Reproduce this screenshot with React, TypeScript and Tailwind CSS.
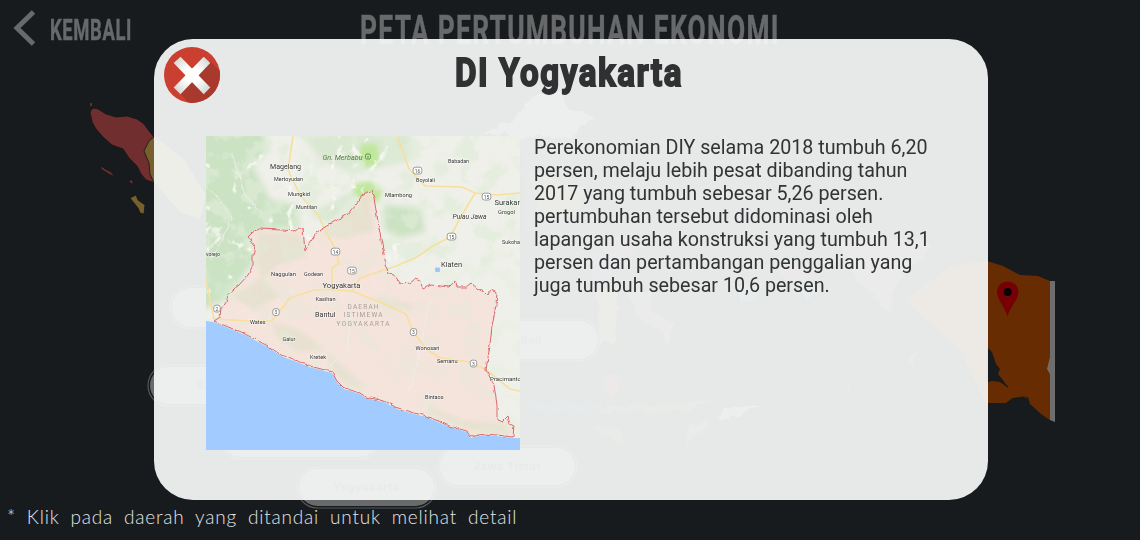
import React from "react";

type Label = [string, number, number, number, number];

const towns: Label[] = [
  ["Magelang", 270, 169, 31, 7.5],
  ["Mertoyudan", 274, 180.5, 29, 5.5],
  ["Mungkid", 288, 196, 22, 5.5],
  ["Muntilan", 296, 208.5, 21, 5.5],
  ["Babadan", 448, 163, 21, 5.5],
  ["Boyolali", 416, 182, 19, 5.5],
  ["Mlambong", 385, 197, 27, 5.5],
  ["Surakar", 494.5, 205, 25.5, 7.5],
  ["Grogol", 498, 214, 17, 5.5],
  ["Sukoha", 502, 244, 18, 5.5],
  ["Klaten", 441, 266.5, 21, 7.5],
  ["vorejo", 206, 256, 14, 5.5],
  ["Naggulan", 271, 276, 25, 5.5],
  ["Godean", 304, 276, 19, 5.5],
  ["Yogyakarta", 322.5, 287.5, 38, 8],
  ["Kasihan", 315.5, 301, 20, 5.5],
  ["Bantul", 315, 317, 20.5, 7],
  ["Wates", 250, 323.5, 15.5, 5.5],
  ["Galur", 282.5, 341, 13, 5.5],
  ["Kretek", 310, 359, 16, 5.5],
  ["Wonosari", 415.5, 350, 24, 5.5],
  ["Semanu", 437, 363, 20.5, 5.5],
  ["Pracimanto", 490, 381, 31, 6],
  ["Bintaos", 425, 398.5, 18.5, 5.5],
];

const shields: [string, number, number][] = [
  ["14", 335.5, 251.5], ["15", 352, 270.5], ["16", 417.5, 170.5], ["15", 486.5, 196.5],
  ["15", 451.5, 236.5], ["2", 217, 308.5], ["3", 276, 312], ["3", 413.5, 332], ["3", 473.5, 363.5],
];

const province =
  "M214 321 L220 317 L221 308 L226 301 L229 293 L239 285 L248 275 L253 265 L253 255 L255 246 L252 242 L248 237 L253 232 L258 229 L282 230 L294 231 L299 227 L303 229 L304 240 L305 251 L309 244 L317 232 L325 227 L339 219 L347 215 L355 205 L363 195 L371 190 L374 198 L378 222 L383 250 L388 274 L394 275 L401 284 L410 283 L415 279 L420 281 L423 289 L431 285 L441 286 L449 287 L455 281 L457 287 L466 287 L471 283 L478 289 L484 292 L488 296 L491 289 L497 292 L496 305 L492 326 L490 345 L486 370 L494 385 L497 405 L497 420 L502 422 L508 416 L510 424 L514 426 L513 437 L497 435 L484 434 L471 437 L467 431 L449 426 L427 416 L414 413 L397 408 L384 401 L366 397 L360 393 L344 388 L337 381 L332 372 L310 366 L281 355 L268 346 L245 334 Z";

const coast =
  "M206 321 L214 322 L245 335 L268 347 L281 356 L310 367 L332 373 L337 382 L344 389 L360 394 L366 398 L384 402 L397 409 L414 414 L427 417 L449 427 L467 432 L470 438 L484 435 L497 436 L513 438 L520 438 V450 H206 Z";

function RegionMap() {
  return (
    <svg className="block h-[314px] w-[314px] shrink-0" viewBox="206 136 314 314" fontFamily="Roboto, sans-serif">
      <defs>
        <filter id="patches" x="0" y="0" width="100%" height="100%">
          <feTurbulence type="fractalNoise" baseFrequency="0.05" numOctaves="4" seed="8" />
          <feColorMatrix values="0 0 0 0 0.74  0 0 0 0 0.85  0 0 0 0 0.69  6 0 0 0 -2.95" />
        </filter>
        <filter id="valleys" x="0" y="0" width="100%" height="100%">
          <feTurbulence type="turbulence" baseFrequency="0.024" numOctaves="4" seed="4" />
          <feColorMatrix values="0 0 0 0 0.95  0 0 0 0 0.95  0 0 0 0 0.91  -11 0 0 0 1.7" />
        </filter>
        <filter id="wobble" x="-2%" y="-2%" width="104%" height="104%">
          <feTurbulence type="fractalNoise" baseFrequency="0.16" numOctaves="2" seed="3" result="n" />
          <feDisplacementMap in="SourceGraphic" in2="n" scale="4" xChannelSelector="R" yChannelSelector="G" />
        </filter>
        <filter id="soft"><feGaussianBlur stdDeviation="3" /></filter>
        <filter id="feather"><feGaussianBlur stdDeviation="2" /></filter>
        <clipPath id="inland"><path d={province} /></clipPath>
      </defs>
      <rect x="206" y="136" width="314" height="314" fill="#f0f0ea" />
      <g filter="url(#soft)" fill="#cbe2c3">
        <path d="M200 130 H262 L268 150 L252 165 L270 200 L296 205 L300 228 L258 229 L250 240 L254 262 L225 300 L200 310 Z" />
        <path d="M300 132 H410 L412 160 L350 172 L320 160 Z" opacity=".6" />
        <path d="M384 205 L420 208 L425 232 L400 238 L384 230 Z" />
        <path d="M310 215 L368 183 L330 222 Z" opacity=".7" />
      </g>
      <g filter="url(#feather)" fill="#c0e79c">
        <path d="M362 144 L377 144 L380 164 L365 168 L358 158 Z" />
        <path d="M354 184 L370 181 L383 191 L378 202 L364 203 L354 194 Z" />
      </g>
      <rect x="206" y="136" width="314" height="130" filter="url(#patches)" opacity=".65" />
      <rect x="206" y="266" width="314" height="184" filter="url(#patches)" opacity=".35" />
      <path d="M206 136 H400 V210 H305 V230 H253 V275 L206 320 Z" filter="url(#valleys)" opacity=".85" />
      <path d={province} fill="#f5e0d9" fillOpacity=".82" />
      <g filter="url(#feather)" fill="#dfdfc8" opacity=".6">
        <path d="M258 232 L300 234 L306 256 L280 264 L262 280 L256 258 Z" />
        <path d="M322 234 L368 195 L375 230 L345 238 Z" />
        <path d="M232 296 L262 278 L280 296 L254 310 Z" />
        <path d="M372 296 L410 303 L414 310 L390 309 Z" />
        <path d="M325 352 L350 372 L366 390 L344 384 L332 369 Z" />
        <path d="M270 322 L300 330 L325 350 L300 352 L280 340 Z" />
        <path d="M427 406 L462 420 L505 424 L510 434 L470 430 L430 414 Z" />
      </g>
      <g clipPath="url(#inland)">
        <rect x="206" y="186" width="314" height="264" filter="url(#patches)" opacity=".22" />
      </g>
      <g fill="none" stroke="#eeeee6" strokeWidth="1" filter="url(#wobble)">
        <path d="M206 185 L220 200 L232 218 L222 240 L210 260 M232 155 L245 195 L262 214 M512 136 L506 178 L500 206 L512 230 L520 250" />
        <path d="M500 250 L490 265 L478 280 M430 300 L420 350 L410 390 M350 300 L348 350 L330 366 M280 300 L262 330" />
      </g>
      <g fill="none" stroke="#f7df9f" strokeWidth="1.7" strokeLinejoin="round">
        <path d="M293 136 L288 170 L300 195 L318 215 L328 236 L336 250 L339 263 L332 268 V290 L352 291 L360 278 L396 266 L417 257 L433 246 L450 237 L462 215 L475 193 L462 187 L425 186 L409 169 L397 136" />
        <path d="M475 193 L497 195 L520 193" />
        <path d="M206 280 L211 305 L214 319 L250 321 L272 321 L290 298 L314 290 L332 289 M352 291 L382 303 L406 314 L413 331 L426 349 L440 358 L470 362 L488 371 L505 385 L510 389 L520 391" />
      </g>
      <path d={coast} fill="#a2ccff" />
      <path d={province} fill="none" stroke="#d9686c" strokeWidth="1" strokeLinejoin="bevel" filter="url(#wobble)" />
      <rect x="435" y="267.5" width="5" height="4.5" rx="1" fill="#9cc8fa" />
      <g fill="#fff" stroke="#71777a" strokeWidth=".7">
        {shields.map(([n, x, y], i) => (
          <g key={i}>
            <rect x={x - (n.length > 1 ? 4.3 : 3.2)} y={y - 3.3} width={n.length > 1 ? 8.6 : 6.4} height="6.8" rx="2.2" />
            <text x={x} y={y + 2} fontSize="5" textAnchor="middle" fill="#555" stroke="none">{n}</text>
          </g>
        ))}
      </g>
      <g fill="#333" stroke="#fff" strokeWidth="1.2" strokeOpacity=".55" paintOrder="stroke">
        {towns.map(([t, x, y, w, s]) => (
          <text key={t} x={x} y={y} fontSize={s} textLength={w} lengthAdjust="spacingAndGlyphs">{t}</text>
        ))}
        <text x="452.5" y="219" fontSize="6.5" fontStyle="italic" textLength="34" lengthAdjust="spacingAndGlyphs">Pulau Jawa</text>
      </g>
      <text x="322.5" y="159.5" fontSize="6.5" fontStyle="italic" fill="#56803f" textLength="40" lengthAdjust="spacingAndGlyphs">Gn. Merbabu</text>
      <rect x="365.5" y="154" width="5" height="5" rx="1.5" fill="none" stroke="#56903f" strokeWidth=".9" />
      <path d="M367 157.5 L368 155.5 L369 157.5 Z" fill="#56903f" />
      <g fill="#a79e99" fontSize="6.5">
        <text x="347.5" y="309" textLength="31">DAERAH</text>
        <text x="343.5" y="317.3" textLength="39">ISTIMEWA</text>
        <text x="336.5" y="325.5" textLength="53">YOGYAKARTA</text>
      </g>
    </svg>
  );
}

function Pill({ x, y, w, h, label }: { x: number; y: number; w: number; h: number; label: string }) {
  return (
    <g>
      <rect x={x} y={y} width={w} height={h} rx={h / 2} fill="#171b1e" stroke="#54575a" strokeWidth="1.2" />
      <rect x={x + 2} y={y + 2} width={w - 4} height={h - 4} rx={h / 2 - 2} fill="#686a6b" />
      <text x={x + w / 2} y={y + h / 2 + 3.5} textAnchor="middle" fontSize="11" fontWeight="700" letterSpacing=".5" fill="#2a2d30">{label}</text>
    </g>
  );
}

function Archipelago() {
  return (
    <svg className="absolute inset-0 h-[540px] w-[1140px]" viewBox="0 0 1140 540" fontFamily="Inter, sans-serif">
      <defs>
        <filter id="shore" x="-5%" y="-5%" width="110%" height="110%">
          <feTurbulence type="fractalNoise" baseFrequency="0.07" numOctaves="3" seed="6" result="n" />
          <feDisplacementMap in="SourceGraphic" in2="n" scale="12" xChannelSelector="R" yChannelSelector="G" />
        </filter>
      </defs>
      <g strokeWidth=".8" stroke="#121618">
        <path d="M89.5 103 L92 102 L92.5 106 L90 107 Z" fill="#733030" />
        <path d="M90 112 L93 108 L98 109 L106 114 L116 117 L127 116 L137 119 L144 124 L149 131 L155 138 V183 L146 180 L141 174 L137 166 L129 158 L123 149 L112 145 L103 137 L96 129 L92 122 Z" fill="#702e2e" />
        <path d="M155 136 L149 141 L144 151 L149 163 L150 174 L154 183 L180 212 L200 220 L206 195 L185 160 Z" fill="#78602e" />
        <path d="M101 166 L105 169 L111 172 L115 177 L109 174 L101 169 Z" fill="#733030" />
        <path d="M129 180 L132 180 L134 184 L130 183 Z M117 180 L119 181 L118 183 Z" fill="#733030" />
        <path d="M130 198 L136 195 L138 200 L145 205 L144 214 L140 213 L138 208 Z" fill="#78602e" />
      </g>
      <g filter="url(#shore)">
        <path d="M482 134 L512 122 L526 105 L539 92 L560 92 L568 108 L593 116 L579 125 L575 136 Z" fill="#68696a" />
        <path d="M520 136 H575 L565 220 L525 235 Z" fill="#1b2c23" />
        <path d="M530 170 L585 190 L575 220 L540 215 Z" fill="#4c3a24" />
        <path d="M600 245 L630 230 L640 246 L618 264 Z" fill="#552325" />
        <path d="M590 255 L622 250 L610 280 L592 286 Z" fill="#382c48" />
        <path d="M596 290 L618 288 L615 344 L600 344 Z" fill="#5a4228" />
        <path d="M628 292 L648 290 L650 310 L674 325 L668 346 L660 330 L640 320 Z" fill="#4c304a" />
        <path d="M730 285 L765 284 L755 300 L740 302 Z M790 280 L832 288 L805 300 Z" fill="#28404f" />
        <path d="M780 268 L800 265 L812 278 L790 284 Z" fill="#552325" />
        <path d="M840 244 L870 235 L930 243 L920 263 L896 280 L889 312 L870 295 L845 260 Z" fill="#3f3831" />
        <path d="M910 355 L916 350 L912 368 L907 365 Z M845 395 L851 380 L848 394 Z" fill="#28404f" />
        <path d="M525 403 L594 402 L590 414 L530 413 Z" fill="#24384a" opacity=".6" />
        <path d="M595 405 L625 407 L680 403 L715 400 L690 410 L645 413 L600 411 Z M588 425 L612 425 L625 440 L617 443 L602 434 Z" fill="#363b2b" />
        <path d="M690 427 L707 420 L704 432 L686 445 Z" fill="#3a3f2d" />
        <path d="M714 420 L727 408 L761 404 L743 414 L720 420 Z" fill="#686a6b" />
      </g>
      <path d="M905 300 L950 266 L987 261 L1003 266 L1020 275 L1038 276 L1050 281 V420 L1041 414 L1030 404 L1024 397 L1027 396 L1013 398 L1006 403 H986 L960 350 L925 319 Z" fill="#682c03" />
      <path d="M986 346 L992 352 L996 364 L1000 369 L998 374 L1003 380 L1007 387 L1000 382 L992 381 L986 383 Z" fill="#171b1e" />
      <path d="M1000 380 L1008 387" stroke="#171b1e" strokeWidth="1.2" />
      <path d="M1006 403 L1013 398 L1020 399 L1028 397 L1034 407 L1050 421 H1006 Z" fill="#171b1e" />
      <path d="M1028 397 H1050 V420 L1041 414 L1030 404 Z" fill="#682c03" />
      <path d="M1049.5 281 V420" stroke="#4b3526" strokeWidth="1" />
      <path d="M1050 281 H1055 V422 L1050 420 V374 L1047 369 L1050 357 Z" fill="#6e6e6e" />
      <path d="M612 402 C608 391 603 389 603 382 A8.5 8.5 0 0 1 620 382 C620 389 615 393 612 402 Z" fill="#5c1a1c" />
      <path d="M1007.500 317 C1006 308 997 300 997 292 A10.700 10.500 0 0 1 1018.500 292 C1018.500 300 1009 308 1007.500 317 Z" fill="#760004" />
      <circle cx="1007.700" cy="292" r="3.900" fill="#050505" />
      <Pill x={170} y={286} w={130} h={43} label="" />
      <Pill x={148} y={365} w={138} h={41} label="Banten" />
      <Pill x={220} y={418} w={160} h={41} label="" />
      <Pill x={462} y={319} w={138} h={42} label="Bali" />
      <Pill x={438} y={446} w={139} h={41} label="Jawa Timur" />
      <Pill x={297} y={467} w={139} h={41} label="Yogyakarta" />
    </svg>
  );
}

function CloseIcon() {
  return (
    <svg className="block size-full" viewBox="0 0 56 56">
      <defs>
        <linearGradient id="bar1" x1="10" y1="10" x2="46" y2="46" gradientUnits="userSpaceOnUse">
          <stop stopColor="#c9d0c8" /><stop offset=".35" stopColor="#fff" /><stop offset=".65" stopColor="#fff" /><stop offset="1" stopColor="#c9d0c8" />
        </linearGradient>
        <linearGradient id="bar2" x1="46" y1="10" x2="10" y2="46" gradientUnits="userSpaceOnUse">
          <stop stopColor="#c9d0c8" /><stop offset=".35" stopColor="#fff" /><stop offset=".65" stopColor="#fff" /><stop offset="1" stopColor="#c9d0c8" />
        </linearGradient>
        <clipPath id="disc"><circle cx="28" cy="28" r="28" /></clipPath>
      </defs>
      <circle cx="28" cy="28" r="28" fill="#cb3f31" />
      <path clipPath="url(#disc)" d="M46 14 L60 28 V60 H28 L17 47 L28 28 Z" fill="#a9382d" />
      <path d="M9.700 16 L16.500 9.700 L46.300 40.500 L39.700 47.300 Z" fill="url(#bar1)" />
      <path d="M39.700 9.700 L46.300 16 L16.500 47.300 L9.700 40.500 Z" fill="url(#bar2)" />
      <path d="M28 21 L35 28 L28 35.500 L21 28 Z" fill="#fff" />
    </svg>
  );
}

export default function App() {
  return (
    <div className="relative flex h-[540px] w-[1140px] flex-col overflow-hidden bg-[#171b1e]">
      <Archipelago />
      <header className="relative flex h-[39px] shrink-0 items-start">
        <button className="flex items-start pl-[13px] pt-[9px] text-[#68696a]">
          <svg className="h-[38px] w-6" viewBox="0 0 24 38" fill="none" stroke="currentColor" strokeWidth="5">
            <path d="M20.500 3 L4 19 L20.500 35" />
          </svg>
          <span className="ml-[13px] mt-[5px] block w-[82px] origin-left scale-x-[.635] whitespace-nowrap font-[Roboto,sans-serif] text-[29px] font-bold leading-[32px] tracking-[1px] [-webkit-text-stroke:.5px_#68696a]">KEMBALI</span>
        </button>
        <h1 className="ml-[227.500px] mt-[9px] w-[420px] origin-left scale-x-[.643] whitespace-nowrap font-[Roboto,sans-serif] text-[41px] font-bold leading-[43px] tracking-[2px] text-[#68696a] [-webkit-text-stroke:.5px_#68696a]">PETA PERTUMBUHAN EKONOMI</h1>
      </header>
      <section className="relative ml-[154px] h-[461px] w-[834px] shrink-0 rounded-[39px] bg-[rgba(249,251,250,0.92)]">
        <div className="flex h-[97px] items-start">
          <button className="ml-[10px] mt-2 size-14 shrink-0"><CloseIcon /></button>
          <h2 className="ml-[235px] mt-[11px] w-[230px] origin-left scale-x-[.85] whitespace-nowrap font-[Roboto,sans-serif] text-[39px] font-bold leading-[46px] tracking-[1.800px] text-[#303132] [-webkit-text-stroke:1.800px_#303132]">DI Yogyakarta</h2>
        </div>
        <div className="flex pl-[52px]">
          <RegionMap />
          <p className="ml-[14px] whitespace-pre font-[Roboto,sans-serif] text-[19.700px] leading-[23px] text-[#313334]">{`Perekonomian DIY selama 2018 tumbuh 6,20
persen, melaju lebih pesat dibanding tahun
2017 yang tumbuh sebesar 5,26 persen.
pertumbuhan tersebut didominasi oleh
lapangan usaha konstruksi yang tumbuh 13,1
persen dan pertambangan penggalian yang
juga tumbuh sebesar 10,6 persen.`}</p>
        </div>
      </section>
      <footer className="relative flex h-10 items-start pl-[7px] pt-[4px]">
        <p className="whitespace-nowrap font-[Lato,sans-serif] text-[19px] font-light leading-[26px] tracking-[0.800px] [word-spacing:5px] text-[#e2e4e5]">* Klik pada daerah yang ditandai untuk melihat detail</p>
      </footer>
    </div>
  );
}
